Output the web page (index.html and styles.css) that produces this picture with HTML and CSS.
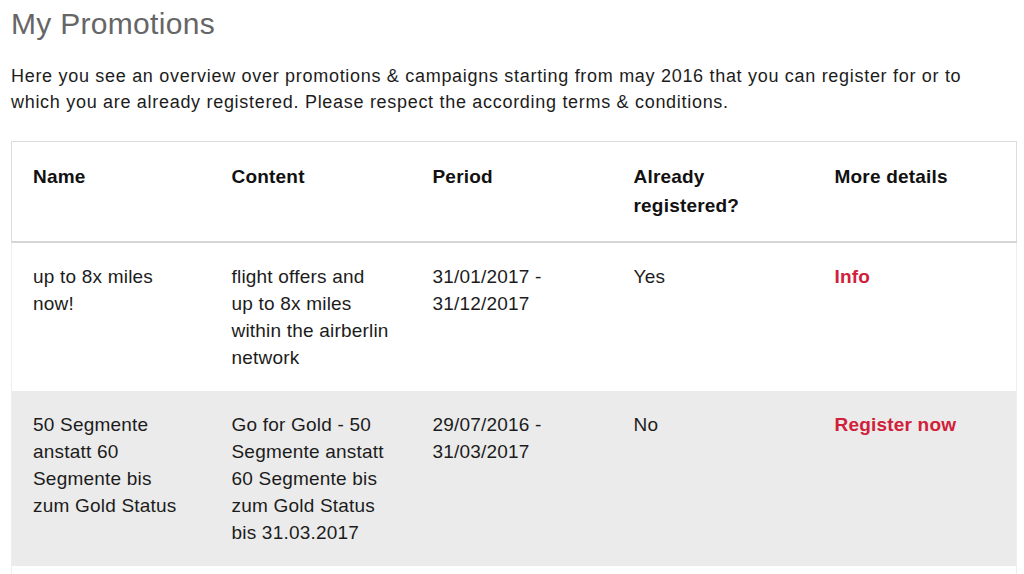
FILE: index.html
```html
<!DOCTYPE html>
<html>
<head>
<meta charset="utf-8">
<link rel="stylesheet" href="styles.css">
</head>
<body>
<div class="page">
  <h1 class="title">My Promotions</h1>
  <p class="intro">Here you see an overview over promotions &amp; campaigns starting from may 2016 that you can register for or to which you are already registered. Please respect the according terms &amp; conditions.</p>
  <table class="promo">
    <colgroup>
      <col class="c-name">
      <col class="c-mid">
      <col class="c-mid">
      <col class="c-mid">
      <col>
    </colgroup>
    <thead>
      <tr>
        <th>Name</th>
        <th>Content</th>
        <th>Period</th>
        <th>Already registered?</th>
        <th>More details</th>
      </tr>
    </thead>
    <tbody>
      <tr>
        <td>up to 8x miles now!</td>
        <td>flight offers and up to 8x miles within the airberlin network</td>
        <td>31/01/2017 - 31/12/2017</td>
        <td>Yes</td>
        <td><a class="link" href="#">Info</a></td>
      </tr>
      <tr class="alt">
        <td>50 Segmente anstatt 60 Segmente bis zum Gold Status</td>
        <td>Go for Gold - 50 Segmente anstatt 60 Segmente bis zum Gold Status bis 31.03.2017</td>
        <td>29/07/2016 - 31/03/2017</td>
        <td>No</td>
        <td><a class="link" href="#">Register now</a></td>
      </tr>
      <tr>
        <td>&nbsp;</td><td></td><td></td><td></td><td></td>
      </tr>
    </tbody>
  </table>
</div>
</body>
</html>
```
FILE: styles.css
```css
html, body {
  margin: 0;
  padding: 0;
  background: #fff;
}
body {
  font-family: "Liberation Sans", Arial, sans-serif;
  color: #1c1c1c;
}
.page {
  padding: 0 7px 0 11px;
}
.title {
  margin: 0;
  padding-top: 5px;
  font-size: 30px;
  font-weight: normal;
  line-height: 38px;
  letter-spacing: 0.3px;
  color: #666;
}
.intro {
  max-width: 990px;
  margin: 20px 0 26px 0;
  font-size: 18px;
  line-height: 26px;
  letter-spacing: 0.7px;
  color: #1c1c1c;
}
.promo {
  width: 1006px;
  border-collapse: collapse;
  table-layout: fixed;
  font-size: 19px;
  letter-spacing: 0.2px;
}
.c-name {
  width: 199px;
}
.c-mid {
  width: 201px;
}
.promo th, .promo td {
  text-align: left;
  vertical-align: top;
  padding: 20px 22px 20px 21px;
}
.promo th {
  font-weight: bold;
  line-height: 29px;
  padding-top: 20px;
  padding-bottom: 21px;
  color: #111;
}
.promo thead tr {
  border: 1px solid #dcdcdc;
  border-bottom: 2px solid #d6d6d6;
}
.promo td {
  line-height: 27px;
}
.promo tbody tr {
  border-left: 1px solid #eeeeee;
  border-right: 1px solid #eeeeee;
}
.promo tbody tr.alt {
  background: #ebebeb;
}
.link {
  color: #d0203a;
  font-weight: bold;
  text-decoration: none;
}
```
